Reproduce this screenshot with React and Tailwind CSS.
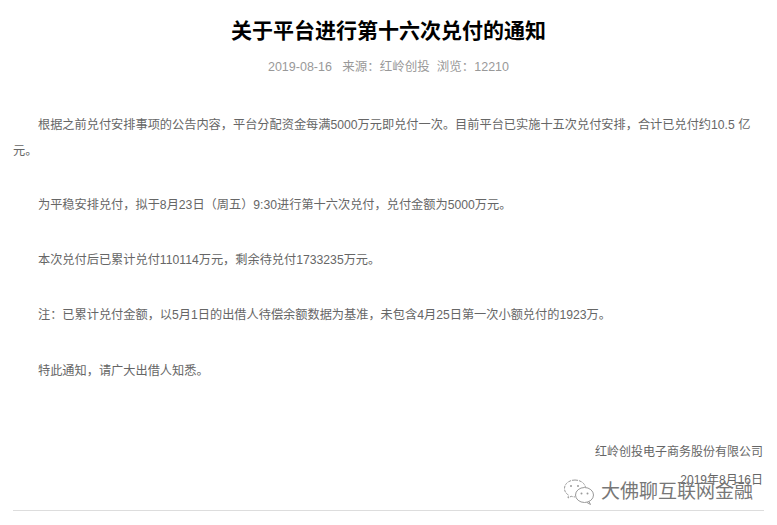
const paragraphs = [
  "根据之前兑付安排事项的公告内容，平台分配资金每满5000万元即兑付一次。目前平台已实施十五次兑付安排，合计已兑付约10.5 亿元。",
  "为平稳安排兑付，拟于8月23日（周五）9:30进行第十六次兑付，兑付金额为5000万元。",
  "本次兑付后已累计兑付110114万元，剩余待兑付1733235万元。",
  "注：已累计兑付金额，以5月1日的出借人待偿余额数据为基准，未包含4月25日第一次小额兑付的1923万。",
  "特此通知，请广大出借人知悉。",
];

function WechatIcon() {
  return (
    <svg width="32" height="27" viewBox="0 0 32 27" fill="none" stroke="#9a9a9a" strokeWidth="1">
      <path d="M12 1C6 1 1.500 4.800 1.500 9.500c0 2.800 1.500 5 4 6.600L5 19l3.200-1.700c1.300.4 2.400.6 3.800.6" strokeDasharray="3 1" />
      <path d="M12 1c5 0 9.500 2.800 10.400 7" strokeDasharray="3 1" />
      <ellipse cx="21.500" cy="16" rx="9" ry="7.500" />
      <path d="M26 22.500l1.500 3-3.500-2" />
      <circle cx="18.500" cy="14.500" r="1" fill="#9a9a9a" stroke="none" />
      <circle cx="24.500" cy="14.500" r="1" fill="#9a9a9a" stroke="none" />
      <circle cx="8" cy="7" r="1" fill="#9a9a9a" stroke="none" />
      <circle cx="15" cy="7" r="1" fill="#9a9a9a" stroke="none" />
    </svg>
  );
}

export default function App() {
  return (
    <div className="relative h-[525px] w-[777px] overflow-hidden bg-white font-['Liberation_Sans','Noto_Sans_CJK_SC',sans-serif]">
      <div className="px-[13px]">
        <h1 className="pt-[17px] text-center text-[21px] leading-[28px] font-bold text-black">
          关于平台进行第十六次兑付的通知
        </h1>
        <div className="mt-[13px] text-center text-[12.500px] leading-[18px] text-[#999999]">
          2019-08-16 &nbsp; 来源：红岭创投 &nbsp;浏览：12210
        </div>

        <div className="mt-[35.500px] text-[12.200px] text-[#666666]">
          <p className="mb-[28px] indent-[25px] leading-[26px]">{paragraphs[0]}</p>
          {paragraphs.slice(1).map((text) => (
            <p key={text} className="mb-[27.700px] indent-[25px] leading-[27.700px]">
              {text}
            </p>
          ))}
        </div>

        <div className="mt-[54px] pr-[1px] text-right text-[12px] leading-[27.700px] text-[#666666]">
          <p>红岭创投电子商务股份有限公司</p>
          <p>2019年8月16日</p>
        </div>
      </div>

      <div className="mx-[13px] mt-[15px] border-b border-[#dddddd]" />

      <div className="absolute top-[478px] left-[563px] flex items-center gap-[6px]">
        <WechatIcon />
        <span className="text-[19px] leading-[28px] text-[#777777]">大佛聊互联网金融</span>
      </div>
    </div>
  );
}
